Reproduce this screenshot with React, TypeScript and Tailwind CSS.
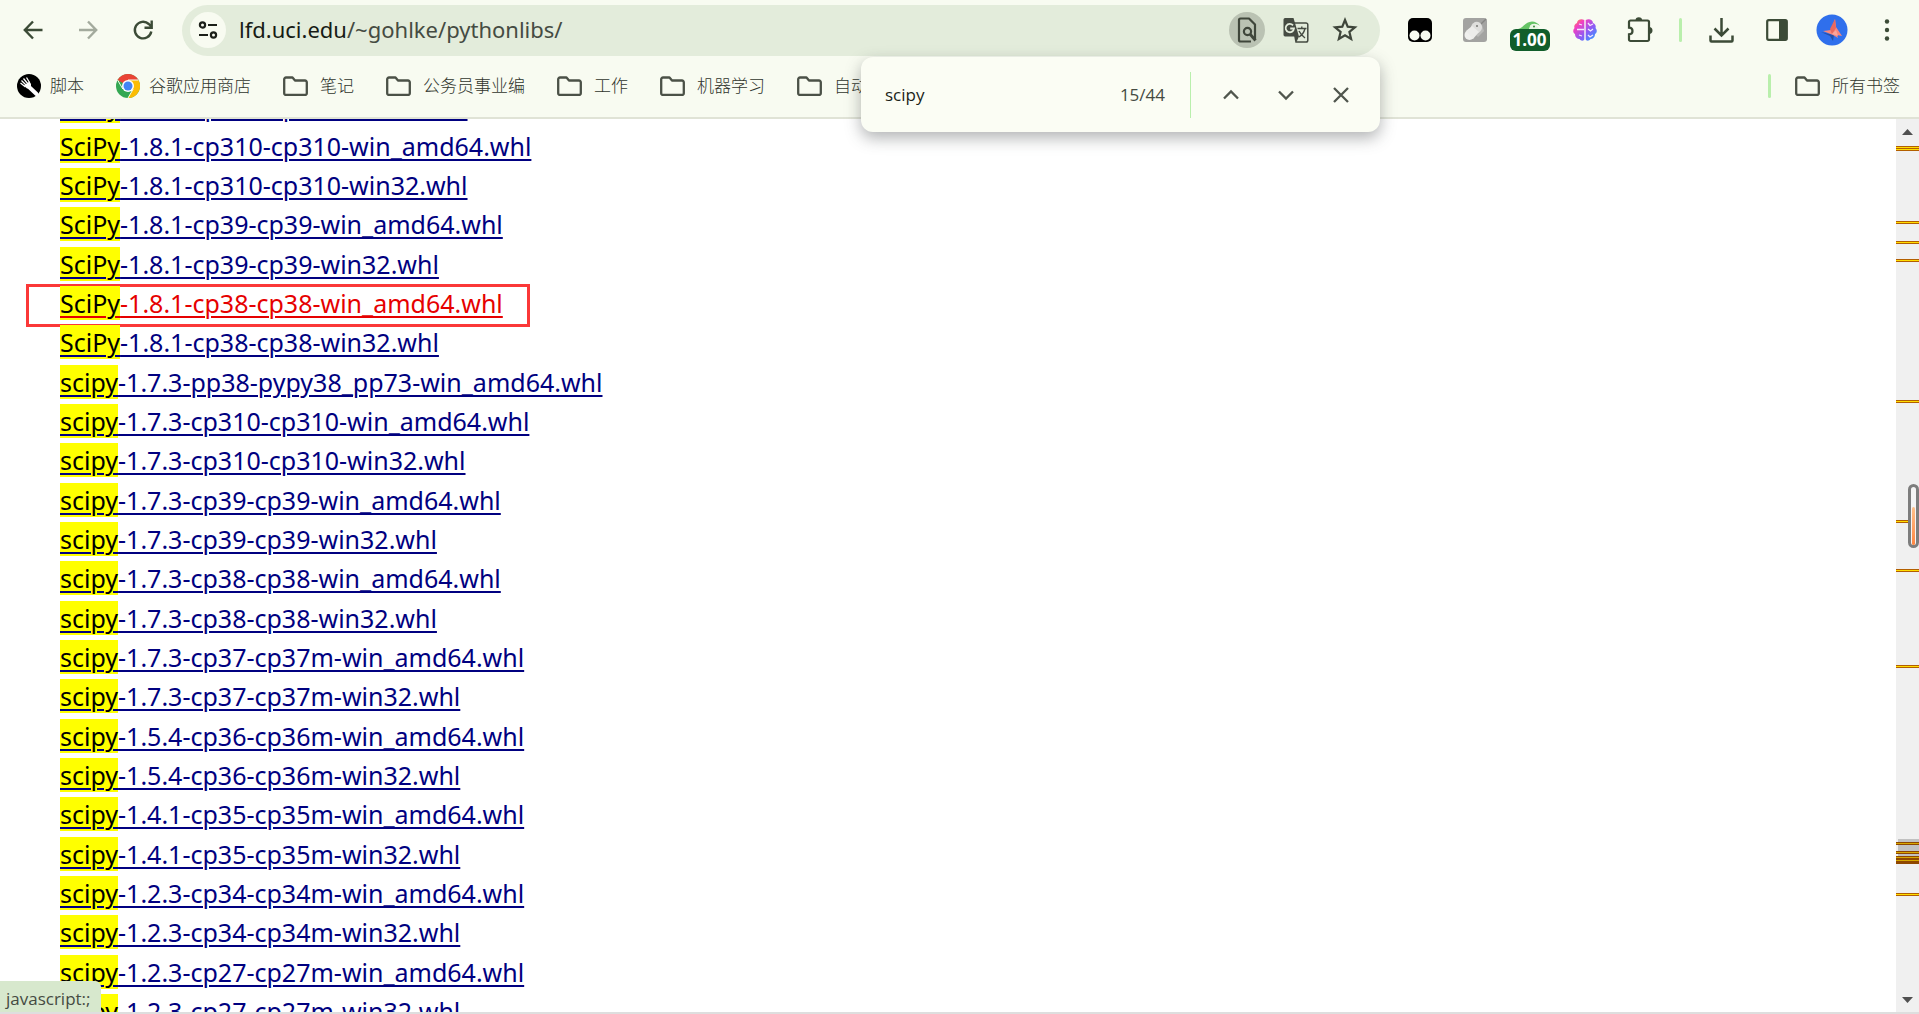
import type { ReactNode } from "react";

const wheels = [
  "SciPy-1.8.1-cp311-cp311-win32.whl",
  "SciPy-1.8.1-cp310-cp310-win_amd64.whl",
  "SciPy-1.8.1-cp310-cp310-win32.whl",
  "SciPy-1.8.1-cp39-cp39-win_amd64.whl",
  "SciPy-1.8.1-cp39-cp39-win32.whl",
  "SciPy-1.8.1-cp38-cp38-win_amd64.whl",
  "SciPy-1.8.1-cp38-cp38-win32.whl",
  "scipy-1.7.3-pp38-pypy38_pp73-win_amd64.whl",
  "scipy-1.7.3-cp310-cp310-win_amd64.whl",
  "scipy-1.7.3-cp310-cp310-win32.whl",
  "scipy-1.7.3-cp39-cp39-win_amd64.whl",
  "scipy-1.7.3-cp39-cp39-win32.whl",
  "scipy-1.7.3-cp38-cp38-win_amd64.whl",
  "scipy-1.7.3-cp38-cp38-win32.whl",
  "scipy-1.7.3-cp37-cp37m-win_amd64.whl",
  "scipy-1.7.3-cp37-cp37m-win32.whl",
  "scipy-1.5.4-cp36-cp36m-win_amd64.whl",
  "scipy-1.5.4-cp36-cp36m-win32.whl",
  "scipy-1.4.1-cp35-cp35m-win_amd64.whl",
  "scipy-1.4.1-cp35-cp35m-win32.whl",
  "scipy-1.2.3-cp34-cp34m-win_amd64.whl",
  "scipy-1.2.3-cp34-cp34m-win32.whl",
  "scipy-1.2.3-cp27-cp27m-win_amd64.whl",
  "scipy-1.2.3-cp27-cp27m-win32.whl",
];

const visited = "SciPy-1.8.1-cp38-cp38-win_amd64.whl";

const folders = ["笔记", "公务员事业编", "工作", "机器学习", "自动化"];

// distance of every search hit from the top of the scroll track
const hits = [27, 29, 102, 122, 140, 281, 401, 450, 546, 774];
const hitsUnderThumb = [723, 732, 737, 740];

function ToolButton({ label, children }: { label: string; children: ReactNode }) {
  return (
    <button aria-label={label} className="flex h-12 w-[55px] items-center justify-center">
      {children}
    </button>
  );
}

function FolderIcon() {
  return (
    <svg viewBox="0 0 25 20" className="h-5 w-[25px] shrink-0" fill="none" stroke="#4b5147" strokeWidth="2.300" strokeLinejoin="round">
      <path d="M3 1.500h6.500l2.500 3H22a1.800 1.800 0 0 1 1.800 1.800v10.900A1.800 1.800 0 0 1 22 19H3a1.800 1.800 0 0 1-1.800-1.800V3.300A1.800 1.800 0 0 1 3 1.500z" />
    </svg>
  );
}

function Toolbar() {
  return (
    <div className="flex h-[59px] items-center pt-px pl-[5px]">
      <ToolButton label="后退">
        <svg viewBox="0 0 24 24" className="size-6" fill="none" stroke="#3c4b37" strokeWidth="2.400">
          <path d="M21.500 12H4.500M12 3.500L3.800 12l8.200 8.500" />
        </svg>
      </ToolButton>
      <ToolButton label="前进">
        <svg viewBox="0 0 24 24" className="size-6" fill="none" stroke="#a3aa9d" strokeWidth="2.400">
          <path d="M3 12h17M12 3.500l8.200 8.500-8.200 8.500" />
        </svg>
      </ToolButton>
      <ToolButton label="重新加载">
        <svg viewBox="0 0 24 24" className="size-6" fill="none" stroke="#3c4b37" strokeWidth="2.400">
          <path d="M20.300 13.500A8.300 8.300 0 1 1 17.800 6l2.700 2.700M20.700 2.500v7.300h-7.200" />
        </svg>
      </ToolButton>
      <div className="ml-3 flex h-[51px] flex-1 items-center rounded-full bg-[#e3ecdb] pr-[22px] pl-2">
        <button aria-label="查看网站信息" className="flex size-9 items-center justify-center rounded-full bg-[#f8fbf1]">
          <svg viewBox="0 0 20 18" className="h-[18px] w-5" fill="none" stroke="#1b1f19" strokeWidth="2.200">
            <circle cx="4.500" cy="4" r="2.600" />
            <path d="M10 4h9M1 14h9" />
            <circle cx="15.500" cy="14" r="2.600" />
          </svg>
        </button>
        <div className="ml-[13px] flex-1 pb-px font-['Noto_Sans',sans-serif] text-[22px] text-[#454b42]">
          <span className="text-[#171b15]">lfd.uci.edu</span>/~gohlke/pythonlibs/
        </div>
        <button aria-label="查找" className="flex size-9 items-center justify-center rounded-full bg-[#bac2b3]">
          <svg viewBox="0 0 20 26" className="h-[26px] w-5" fill="none" stroke="#3f463b" strokeWidth="2.200">
            <path d="M14 24.500H3.500A1.500 1.500 0 0 1 2 23V3a1.500 1.500 0 0 1 1.500-1.500H12l6 6v15" strokeLinejoin="round" />
            <circle cx="10.500" cy="14.500" r="3.600" />
            <path d="M13 17l5.500 6.500" strokeWidth="2.800" />
          </svg>
        </button>
        <button aria-label="翻译此页" className="ml-[17px] flex w-[27px] justify-center">
          <svg viewBox="0 0 26 26" className="size-[26px]">
            <path d="M9.500 6H23a1.800 1.800 0 0 1 1.800 1.800v15.400A1.800 1.800 0 0 1 23 25H13z" fill="none" stroke="#454b42" strokeWidth="1.500" />
            <path d="M2 1h8.500l5.500 18.500H2A1.700 1.700 0 0 1 .500 18V2.500A1.700 1.700 0 0 1 2 1zM12 19.500h4L13.500 25z" fill="#454b42" />
            <path d="M10 8.300A4.200 4.200 0 1 0 11 11.500H7.200" fill="none" stroke="#e3ecdb" strokeWidth="1.800" />
            <path d="M14.500 11.500h9M18.800 9.500v2M22 11.500c-1 4-3.500 7-6 8.500M16 14c1.500 3 3.500 5 6 7" fill="none" stroke="#454b42" strokeWidth="1.400" />
          </svg>
        </button>
        <button aria-label="为此标签页添加书签" className="ml-[22px] flex w-[27px] justify-center">
          <svg viewBox="0 0 26 26" className="size-[26px]" fill="none" stroke="#3f463b" strokeWidth="2.200">
            <path d="M13 3l2.700 6.700 7.200.600-5.500 4.700 1.700 7L13 18.200 6.900 22l1.700-7-5.500-4.700 7.200-.600z" />
          </svg>
        </button>
      </div>
      <div className="flex items-center pr-[5px] pl-3">
        <ToolButton label="Tampermonkey">
          <svg viewBox="0 0 24 24" className="size-6">
            <rect width="24" height="24" rx="5" fill="#000" />
            <circle cx="6.500" cy="17.500" r="5" fill="#f8fbf1" />
            <circle cx="17.500" cy="17.500" r="5" fill="#f8fbf1" />
          </svg>
        </ToolButton>
        <ToolButton label="扩展程序">
          <svg viewBox="0 0 24 24" className="size-6">
            <rect width="24" height="24" rx="3" fill="#a3a3a1" />
            <path d="M14 5l5 2 2 6-6 6-4-4z" fill="#b9b9b7" />
            <path d="M18 6l5-5" stroke="#858583" strokeWidth="1.500" />
            <path d="M8 9c1-5 7-7 10-3 2 3 1 7-3 9z" fill="#dededc" />
            <circle cx="6.500" cy="17" r="5" fill="#f0f0ee" />
            <path d="M3 13l6-5 7 6-6 7z" fill="#ececea" />
            <circle cx="14" cy="8" r="1" fill="#777775" />
          </svg>
        </ToolButton>
        <button aria-label="播放速度" className="flex h-12 w-[55px] flex-col items-center pt-[15px]">
          <svg viewBox="0 0 24 8" className="h-2 w-6 shrink-0">
            <path d="M0 8C5 7 7 1 14 .500c3 0 6 1.500 8 4.500-4-3-8-3-10 0l-1 3z" fill="#66c466" />
            <path d="M12 5c3-3 7-2 9 3h-9z" fill="#e8f5e3" />
            <circle cx="16" cy="5.500" r="1" fill="#3b8a3b" />
          </svg>
          <span className="flex h-[22px] w-10 shrink-0 items-center justify-center rounded-md bg-[#115e2b] text-[17px] font-bold text-white">1.00</span>
        </button>
        <ToolButton label="AI 助手">
          <svg viewBox="0 0 24 24" className="size-6">
            <defs>
              <linearGradient id="brain" x1="0" y1="0" x2="1" y2="1">
                <stop offset="0" stopColor="#ff9a2e" />
                <stop offset="0.250" stopColor="#f43fc0" />
                <stop offset="0.600" stopColor="#8b5cf6" />
                <stop offset="1" stopColor="#22a7ff" />
              </linearGradient>
            </defs>
            <path d="M11.300 2C8 0 4 2 4 5 1 6 1 9 1.500 10-.500 12 0 15 2 16c0 4 3 5 4.500 5 1.500 2.500 4.800 2 4.800 0zM12.700 2C16 0 20 2 20 5c3 1 3 4 2.500 5 2 2 1.500 5-.500 6 0 4-3 5-4.500 5-1.500 2.500-4.800 2-4.800 0z" fill="url(#brain)" />
            <path d="M4 11.500h7M6 6l3 1M6 17l3 1M15 5l2 2.500L20 6M15 11l2.500 2L20 11M15 17l2 2 3-2" fill="none" stroke="#f3e8ff" strokeWidth="1.300" />
          </svg>
        </ToolButton>
        <ToolButton label="扩展程序菜单">
          <svg viewBox="0 0 28 28" className="size-7">
            <path d="M4.500 4.500h17A1.500 1.500 0 0 1 23 6v17.500a1.500 1.500 0 0 1-1.500 1.500h-17A1.500 1.500 0 0 1 3 23.500v-5.200c2.200 0 3.500-1.300 3.500-3.300S5.200 11.600 3 11.600V6a1.500 1.500 0 0 1 1.500-1.500z" fill="none" stroke="#3c4b37" strokeWidth="2.200" />
            <path d="M9.500 4.500a3.300 3.300 0 0 1 6.600 0zM23 11a3.400 3.400 0 0 1 0 7z" fill="#3c4b37" />
          </svg>
        </ToolButton>
        <div className="flex w-[27px] justify-center">
          <div className="h-6 w-[3px] rounded-full bg-[#b9efac]" />
        </div>
        <ToolButton label="下载内容">
          <svg viewBox="0 0 25 25" className="size-[25px]" fill="none" stroke="#3c4b37" strokeWidth="2.500">
            <path d="M12.500 0v17M5.500 10.500l7 7 7-7M1.500 17.500v5a1 1 0 0 0 1 1h20a1 1 0 0 0 1-1v-5" />
          </svg>
        </ToolButton>
        <ToolButton label="侧边栏">
          <svg viewBox="0 0 22 22" className="size-[22px]">
            <rect x="1.200" y="1.200" width="19.600" height="19.600" rx="1.500" fill="none" stroke="#3c4b37" strokeWidth="2.200" />
            <path d="M13 1h8v20h-8z" fill="#3c4b37" />
          </svg>
        </ToolButton>
        <ToolButton label="个人资料">
          <svg viewBox="0 0 32 32" className="size-8">
            <circle cx="16" cy="16" r="15.500" fill="#2f6fec" />
            <path d="M5 18l9 4 3 5 1-6z" fill="#2350a8" />
            <path d="M19 5l1 8 6 9-5-1 1 3-5-3-10-4 8-1z" fill="#f9877b" />
            <path d="M19 5l1 9-4 6-2-5z" fill="#e8695f" />
            <path d="M16 20l6 2-2-6z" fill="#fba59b" />
          </svg>
        </ToolButton>
        <ToolButton label="自定义及控制">
          <svg viewBox="0 0 6 22" className="h-[22px] w-1.5" fill="#3c4b37">
            <circle cx="3" cy="2.500" r="2.200" />
            <circle cx="3" cy="11" r="2.200" />
            <circle cx="3" cy="19.500" r="2.200" />
          </svg>
        </ToolButton>
      </div>
    </div>
  );
}

function BookmarksBar() {
  return (
    <nav className="flex h-[58px] items-center gap-8 pr-[19px] pb-1 pl-[17px] text-[17px] font-light whitespace-nowrap text-[#30352d]">
      <a href="#" className="flex items-center gap-[9px]">
        <svg viewBox="0 0 24 24" className="size-6 shrink-0">
          <circle cx="12" cy="12" r="12" fill="#000" />
          <path d="M11 12l8.500 8" stroke="#fff" strokeWidth="4" strokeLinecap="round" />
          <path d="M3.500 9l5 4M4.500 6.500l5 5M6.500 4.500l4.500 5.500M9.500 3.500l3 5" stroke="#fff" strokeWidth="1.300" />
          <path d="M7 11.500l5.500-4 1.500 2.500v4l-4 .500z" fill="#fff" />
        </svg>
        脚本
      </a>
      <a href="#" className="flex items-center gap-[9px]">
        <svg viewBox="0 0 24 24" className="size-6 shrink-0">
          <circle cx="12" cy="12" r="12" fill="#34a853" />
          <path d="M12 12L1.600 6A12 12 0 0 1 22.400 6z" fill="#ea4335" />
          <path d="M12 6h10.400A12 12 0 0 1 12 24l5.200-9z" fill="#fbbc05" />
          <path d="M1.600 6l5.200 9M22.400 6H12M12 24l5.200-9" stroke="#f8fbf1" strokeWidth="1" />
          <circle cx="12" cy="12" r="6" fill="#fff" />
          <circle cx="12" cy="12" r="4.500" fill="#4285f4" />
        </svg>
        谷歌应用商店
      </a>
      {folders.map((name) => (
        <button key={name} className="flex items-center gap-3">
          <FolderIcon />
          {name}
        </button>
      ))}
      <div className="ml-auto flex items-center">
        <div className="mr-6 h-6 w-[3px] rounded-full bg-[#b9efac]" />
        <button className="flex items-center gap-3">
          <FolderIcon />
          所有书签
        </button>
      </div>
    </nav>
  );
}

function FindBar() {
  return (
    <div className="absolute top-[57px] right-[539px] z-10 flex h-[75px] w-[519px] items-center rounded-xl bg-[#fbfdf4] pr-3 pl-6 shadow-[0_6px_16px_rgba(60,64,67,0.4)]">
      <input aria-label="在页面中查找" defaultValue="scipy" className="min-w-0 flex-1 bg-transparent text-[17px] text-[#1b1f19] outline-none" />
      <span className="text-[17px] text-[#454b42]">15/44</span>
      <div className="mr-3 ml-[25px] h-[46px] w-px bg-[#b9efac]" />
      <ToolButton label="上一个">
        <svg viewBox="0 0 16 16" className="size-4" fill="none" stroke="#50564d" strokeWidth="2.300">
          <path d="M1 11.500l7-7 7 7" />
        </svg>
      </ToolButton>
      <ToolButton label="下一个">
        <svg viewBox="0 0 16 16" className="size-4" fill="none" stroke="#50564d" strokeWidth="2.300">
          <path d="M1 4.500l7 7 7-7" />
        </svg>
      </ToolButton>
      <ToolButton label="关闭">
        <svg viewBox="0 0 16 16" className="size-4" fill="none" stroke="#50564d" strokeWidth="2.300">
          <path d="M1 1l14 14M15 1L1 15" />
        </svg>
      </ToolButton>
    </div>
  );
}

function WheelLink({ name }: { name: string }) {
  const color = name === visited ? "text-[#e60000] decoration-[#e60000]" : "text-[#000080] decoration-[#000080]";
  return (
    <a href="#" className={`block font-['Noto_Sans',sans-serif] text-[25px] leading-8 underline decoration-2 underline-offset-[3px] ${color}`}>
      <mark className="bg-[#ffff00] text-black">{name.slice(0, 5)}</mark>
      {name.slice(5)}
    </a>
  );
}

function ScrollTrack() {
  return (
    <div className="relative flex w-[23px] shrink-0 flex-col items-center justify-between bg-[#f0f0f0] pt-2.5 pb-[9px]">
      <svg viewBox="0 0 11 6" className="h-1.5 w-[11px]" fill="#505050">
        <path d="M0 6l5.500-6L11 6z" />
      </svg>
      <svg viewBox="0 0 11 6" className="h-1.5 w-[11px]" fill="#505050">
        <path d="M0 0l5.500 6L11 0z" />
      </svg>
      <div className="absolute top-[720px] right-0 h-[25px] w-[21px] bg-[#c1c1c1]" />
      <div className="absolute top-[737px] left-0 h-2 w-full bg-[#8f4700]" />
      {hits.map((top) => (
        <div key={top} className="absolute left-0 h-[3px] w-full border-y border-[#b35f00] bg-[#ffdd00]" style={{ top }} />
      ))}
      {hitsUnderThumb.map((top) => (
        <div key={top} className="absolute left-0 h-[3px] w-full border-y border-[#8f4700] bg-[#d6a800]" style={{ top }} />
      ))}
      <div className="absolute top-[365px] right-0 flex h-16 w-[11px] items-end justify-center rounded-full border-[3px] border-[#7d7d7d] bg-[#f5f5f5]">
        <div className="h-[38px] w-[3px] rounded-full bg-linear-to-b from-[#ffc08a] to-[#ff8540]" />
      </div>
    </div>
  );
}

export default function App() {
  return (
    <div className="relative flex h-screen flex-col overflow-hidden bg-white font-['Open_Sans','Noto_Sans_CJK_SC',sans-serif]">
      <header className="shrink-0 border-b-2 border-[#e0e3d6] bg-[#f8fbf1]">
        <Toolbar />
        <BookmarksBar />
      </header>
      <FindBar />
      <div className="flex min-h-0 flex-1 border-b-2 border-[#dedede]">
        <main className="flex-1 overflow-hidden">
          <ul className="-mt-[33px] pl-[26px]">
            {wheels.map((name) => (
              <li key={name} className="flex h-[39px] items-start pt-1 nth-[3n+1]:h-10">
                <div className={name === visited ? "-mt-[3px] border-[3px] border-[#fb3838] pr-6 pb-[5px] pl-[31px]" : "pl-[34px]"}>
                  <WheelLink name={name} />
                </div>
              </li>
            ))}
          </ul>
        </main>
        <ScrollTrack />
      </div>
      <div className="absolute bottom-0.5 left-0 flex h-[31px] items-center rounded-tr-md bg-[#d7e8cd] pt-1 pr-[10px] pl-1.5 text-[17px] text-[#454b42]">javascript:;</div>
    </div>
  );
}
